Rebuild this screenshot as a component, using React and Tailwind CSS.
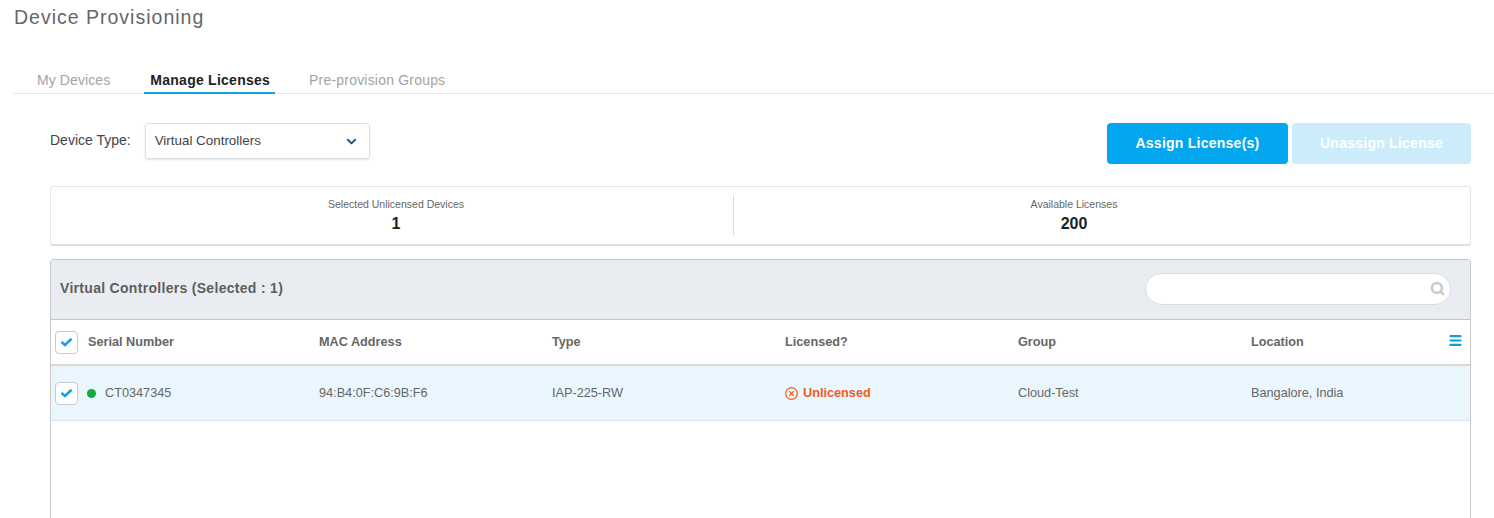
import { Search, ChevronDown, Menu } from 'lucide-react';

const font = { fontFamily: '"Liberation Sans", Arial, sans-serif' };

function Check() {
  return (
    <span className="flex h-[23px] w-[23px] items-center justify-center rounded-[4px] border border-[#c4ccd2] bg-white">
      <svg width="13" height="10" viewBox="0 0 13 10" fill="none">
        <path d="M1.5 5 L5 8 L11.5 1.8" stroke="#1b9fe4" strokeWidth="2.6" />
      </svg>
    </span>
  );
}

function Stat({ label, value, className }) {
  return (
    <div className={`flex flex-col items-center pt-[1px] ${className}`}>
      <div className="text-[10.5px] leading-[13px] text-[#666]">{label}</div>
      <div className="mt-[3px] text-[16px] leading-[20px] font-bold text-[#222]">{value}</div>
    </div>
  );
}

export default function App() {
  const cols = ['MAC Address', 'Type', 'Licensed?', 'Group'];
  return (
    <div style={font} className="h-[518px] overflow-hidden bg-white">
      <h1 className="pl-[14px] pt-[5px] text-[19.5px] leading-[24px] font-normal tracking-[1px] text-[#666]">Device Provisioning</h1>

      <div className="ml-[13px] mt-[33px] flex h-[32px] border-b border-[#e8e8e8] text-[14px]">
        <div className="ml-[24px] pt-[8px] tracking-[0.1px] text-[#a3a3a3]">My Devices</div>
        <div className="ml-[34px] h-[32px] border-b-2 border-[#0ea5d8] pl-[6px] pr-[5px] pt-[8px] font-bold tracking-[0.25px] text-[#222]">Manage Licenses</div>
        <div className="ml-[34px] pt-[8px] tracking-[0.2px] text-[#a3a3a3]">Pre-provision Groups</div>
      </div>

      <div className="ml-[50px] mr-[23px] mt-[29px] flex items-start justify-between">
        <div className="flex items-start">
          <span className="mt-[8px] text-[14px] leading-[18px] text-[#444]">Device Type:</span>
          <div className="ml-[14px] flex h-[36px] w-[225px] items-center justify-between rounded-[3px] border border-[#e0e0e0] pl-[9px] pr-[10px] text-[13.4px] text-[#444] shadow-[0_1px_2px_rgba(0,0,0,0.12)]">
            Virtual Controllers
            <ChevronDown size={15} strokeWidth={3} className="text-[#1d4f7c]" />
          </div>
        </div>
        <div className="flex gap-[4px] text-[14px] font-bold text-white">
          <button className="h-[41px] w-[181px] rounded-[4px] bg-[#02a7f0] tracking-[0.25px]">Assign License(s)</button>
          <button className="h-[41px] w-[179px] rounded-[4px] bg-[#cdecfb] tracking-[0.25px]">Unassign License</button>
        </div>
      </div>

      <div className="ml-[50px] mr-[23px] mt-[22px] flex h-[60px] items-center rounded-[3px] border border-[#e6e6e6] border-b-2 border-b-[#dedede]">
        <Stat label="Selected Unlicensed Devices" value="1" className="w-[682px] pl-[8px]" />
        <div className="h-[41px] w-px bg-[#dddddd]" />
        <Stat label="Available Licenses" value="200" className="w-[680px]" />
      </div>

      <div className="ml-[50px] mr-[23px] mt-[13px] h-[300px] rounded-t-[3px] border border-[#c9c9c9]">
        <div className="flex h-[60px] items-center justify-between border-b border-[#c4c4c4] bg-[#e9edf1] pb-[2px] pl-[9px] pr-[19px]">
          <span className="text-[14px] font-bold tracking-[0.3px] text-[#5e5e5e]">Virtual Controllers (Selected : 1)</span>
          <div className="flex h-[32px] w-[306px] items-center justify-end rounded-full border border-[#dcdcdc] bg-white pr-[5px]">
            <Search size={15} strokeWidth={4} className="text-[#c9c9c9]" />
          </div>
        </div>

        <div className="relative flex h-[46px] items-center border-b-2 border-[#d9d9d9] text-[12.7px] font-bold text-[#666]">
          <div className="flex w-[268px] shrink-0 items-center pl-[4px]">
            <Check />
            <span className="ml-[10px] pt-[2px]">Serial Number</span>
          </div>
          {cols.map((c) => (
            <div key={c} className="w-[233px] shrink-0 pt-[2px]">{c}</div>
          ))}
          <div className="w-[180px] shrink-0 pt-[2px]">Location</div>
          <Menu size={15} strokeWidth={3.5} className="absolute right-[7px] top-[13px] text-[#1a9cc4]" />
        </div>

        <div className="flex h-[55px] items-center border-b border-[#dce3e8] bg-[#eaf6fd] text-[12.7px] text-[#666]">
          <div className="flex w-[268px] shrink-0 items-center pl-[4px]">
            <Check />
            <span className="ml-[9px] h-[9px] w-[9px] rounded-full bg-[#16a83c]" />
            <span className="ml-[9px] pt-[2px]">CT0347345</span>
          </div>
          <div className="w-[233px] shrink-0 pt-[2px]">94:B4:0F:C6:9B:F6</div>
          <div className="w-[233px] shrink-0 pt-[2px]">IAP-225-RW</div>
          <div className="flex w-[233px] shrink-0 items-center pt-[2px] font-bold text-[#ee5a24]">
            <svg width="13" height="13" viewBox="0 0 13 13" fill="none" stroke="#ee5a24" strokeWidth="1.2">
              <circle cx="6.5" cy="6.5" r="5.8" />
              <path d="M4.2 4.2 L8.8 8.8 M8.8 4.2 L4.2 8.8" />
            </svg>
            <span className="ml-[5px]">Unlicensed</span>
          </div>
          <div className="w-[233px] shrink-0 pt-[2px]">Cloud-Test</div>
          <div className="w-[180px] shrink-0 pt-[2px]">Bangalore, India</div>
        </div>
      </div>
    </div>
  );
}
